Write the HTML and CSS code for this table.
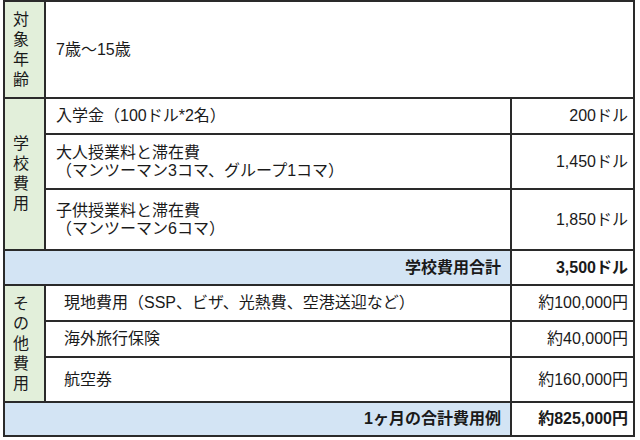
FILE: index.html
```html
<!DOCTYPE html>
<html lang="ja">
<head>
<meta charset="utf-8">
<link rel="stylesheet" href="styles.css">
</head>
<body>
<table class="fees">
  <colgroup>
    <col class="col-cat">
    <col class="col-item">
    <col class="col-val">
  </colgroup>
  <tr class="row-age">
    <th class="cat"><span class="stack">対象年齢</span></th>
    <td class="item" colspan="2">7歳～15歳</td>
  </tr>
  <tr class="row-a">
    <th class="cat" rowspan="3"><span class="stack">学校費用</span></th>
    <td class="item">入学金（100ドル*2名）</td>
    <td class="val">200ドル</td>
  </tr>
  <tr class="row-b">
    <td class="item">大人授業料と滞在費<br>（マンツーマン3コマ、グループ1コマ）</td>
    <td class="val">1,450ドル</td>
  </tr>
  <tr class="row-c">
    <td class="item">子供授業料と滞在費<br>（マンツーマン6コマ）</td>
    <td class="val">1,850ドル</td>
  </tr>
  <tr class="row-total">
    <td class="total-label" colspan="2">学校費用合計</td>
    <td class="val total-val">3,500ドル</td>
  </tr>
  <tr class="row-d">
    <th class="cat" rowspan="3"><span class="stack">その他費用</span></th>
    <td class="item indent">現地費用（SSP、ビザ、光熱費、空港送迎など）</td>
    <td class="val">約100,000円</td>
  </tr>
  <tr class="row-e">
    <td class="item indent">海外旅行保険</td>
    <td class="val">約40,000円</td>
  </tr>
  <tr class="row-f">
    <td class="item indent">航空券</td>
    <td class="val">約160,000円</td>
  </tr>
  <tr class="row-grand">
    <td class="total-label" colspan="2">1ヶ月の合計費用例</td>
    <td class="val total-val">約825,000円</td>
  </tr>
</table>
</body>
</html>
```

FILE: styles.css
```css
html, body {
  margin: 0;
  padding: 0;
  background: #ffffff;
}

body {
  padding: 0 0 0 3px;
  font-family: "Liberation Sans", "Noto Sans CJK JP", sans-serif;
  font-size: 16px;
  color: #1a1a1a;
}

.fees {
  border-collapse: collapse;
  table-layout: fixed;
  width: 632px;
}

.col-cat { width: 41px; }
.col-item { width: 466px; }
.col-val { width: 123px; }

.fees th,
.fees td {
  border: 2px solid #2a2a2a;
  padding: 0;
  line-height: 18px;
  vertical-align: middle;
}

.fees .cat {
  background: #e2efda;
  font-weight: normal;
  text-align: left;
  padding-left: 8px;
}

.stack {
  display: block;
  width: 1em;
  line-height: 20px;
  word-break: break-all;
}

.fees .item {
  text-align: left;
  padding-left: 10px;
}

.fees .item.indent {
  padding-left: 18px;
}

.fees .val {
  text-align: right;
  padding-right: 5px;
}

.fees .total-label {
  background: #d3e4f4;
  text-align: right;
  font-weight: bold;
  padding-right: 9px;
}

.fees .total-val {
  font-weight: bold;
}

.row-age { height: 97px; }
.row-a { height: 36px; }
.row-b { height: 55px; }
.row-c { height: 61px; }
.row-total { height: 35px; }
.row-d { height: 36px; }
.row-e { height: 36px; }
.row-f { height: 45px; }
.row-grand { height: 34px; }
```
